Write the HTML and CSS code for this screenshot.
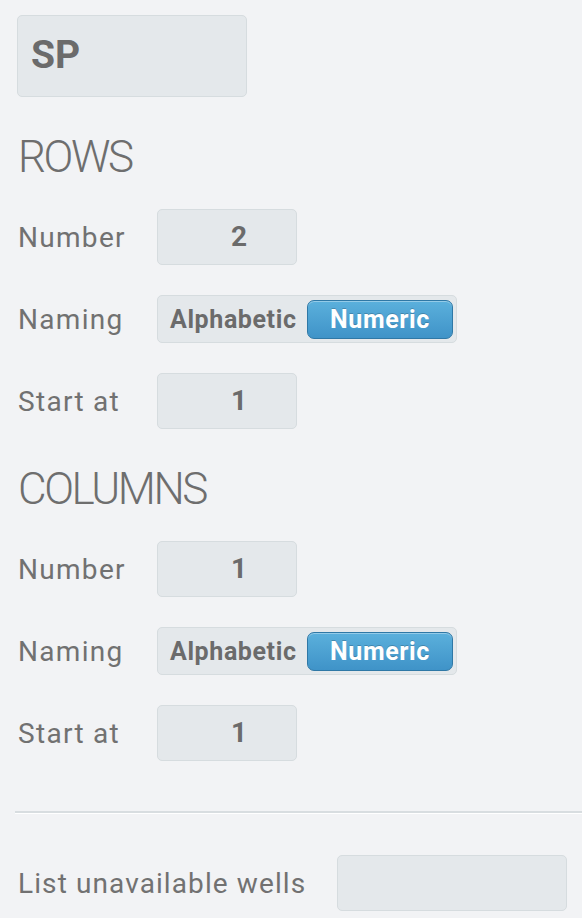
FILE: index.html
```html
<!DOCTYPE html>
<html>
<head>
<meta charset="utf-8">
<link rel="stylesheet" href="styles.css">
</head>
<body>
<div class="panel">
  <div class="name-box">SP</div>

  <h2 class="section-title first">ROWS</h2>
  <div class="field">
    <span class="label">Number</span>
    <div class="num-input">2</div>
  </div>
  <div class="field">
    <span class="label">Naming</span>
    <div class="toggle">
      <span class="opt">Alphabetic</span>
      <span class="opt active">Numeric</span>
    </div>
  </div>
  <div class="field">
    <span class="label">Start at</span>
    <div class="num-input">1</div>
  </div>

  <h2 class="section-title">COLUMNS</h2>
  <div class="field">
    <span class="label">Number</span>
    <div class="num-input">1</div>
  </div>
  <div class="field">
    <span class="label">Naming</span>
    <div class="toggle">
      <span class="opt">Alphabetic</span>
      <span class="opt active">Numeric</span>
    </div>
  </div>
  <div class="field">
    <span class="label">Start at</span>
    <div class="num-input">1</div>
  </div>

  <div class="divider"></div>

  <div class="wells">
    <span class="label wide">List unavailable wells</span>
    <div class="text-input"></div>
  </div>
</div>
</body>
</html>
```

FILE: styles.css
```css
html, body {
  margin: 0;
  padding: 0;
  background: #f2f3f5;
}
body {
  font-family: Roboto, "Liberation Sans", sans-serif;
  color: #6e6e6e;
  width: 582px;
  height: 918px;
  overflow: hidden;
}
.panel {
  padding: 15px 0 0 17px;
}
.name-box {
  box-sizing: border-box;
  width: 230px;
  height: 82px;
  background: #e4e8eb;
  border: 1.5px solid #d6dcdf;
  border-radius: 5px;
  font-weight: 700;
  font-size: 39px;
  line-height: 79px;
  padding-left: 13px;
  color: #6b6b6b;
}
.section-title {
  margin: 0;
  height: 86px;
  box-sizing: border-box;
  padding-top: 25px;
  padding-left: 1px;
  font-size: 44px;
  line-height: 44px;
  font-weight: 300;
  letter-spacing: -2.4px;
  color: #6e6e6e;
}
.section-title.first {
  margin-top: 13px;
}
.field {
  height: 82px;
  display: flex;
  align-items: center;
}
.label {
  width: 140px;
  flex: none;
  font-size: 28px;
  letter-spacing: 1.3px;
  color: #717171;
  padding-left: 1px;
  box-sizing: border-box;
}
.num-input {
  box-sizing: border-box;
  width: 140px;
  height: 56px;
  background: #e4e8eb;
  border: 1.5px solid #d6dcdf;
  border-radius: 5px;
  text-align: center;
  padding-left: 24px;
  font-weight: 700;
  font-size: 28px;
  line-height: 53px;
  color: #6b6b6b;
}
.toggle {
  box-sizing: border-box;
  width: 300px;
  height: 48px;
  background: #e4e8eb;
  border: 1.5px solid #d6dcdf;
  border-radius: 5px;
  display: flex;
  align-items: center;
  padding: 0 3px 0 12px;
  justify-content: space-between;
}
.opt {
  font-weight: 700;
  font-size: 25px;
  color: #6b6b6b;
  letter-spacing: 0.6px;
}
.opt.active {
  box-sizing: border-box;
  width: 146px;
  height: 39px;
  line-height: 37px;
  text-align: center;
  color: #fff;
  border-radius: 7px;
  border: 1.5px solid #2f78a6;
  background: linear-gradient(#5bb0dc, #3f93c8);
  box-shadow: inset 0 1px 0 rgba(255,255,255,0.35);
  text-shadow: 0 -1px 0 rgba(0,0,0,0.2);
}
.divider {
  margin: 37px 0 0 -2px;
  height: 2px;
  background: #d8dde0;
  border-bottom: 1px solid #ffffff;
}
.wells {
  margin-top: 41px;
  display: flex;
  align-items: center;
}
.label.wide {
  width: 320px;
  letter-spacing: 1.1px;
}
.text-input {
  box-sizing: border-box;
  width: 230px;
  height: 56px;
  background: #e4e8eb;
  border: 1.5px solid #d6dcdf;
  border-radius: 5px;
}
```
